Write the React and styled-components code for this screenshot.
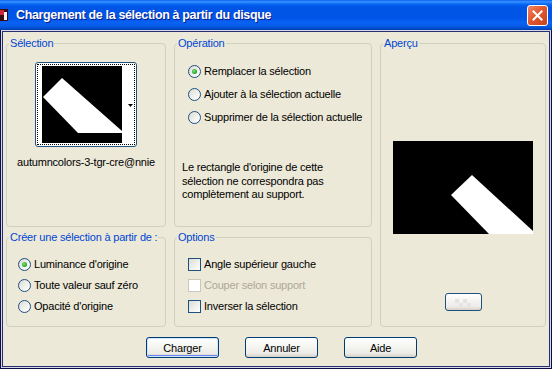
import React from "react";
import styled, { createGlobalStyle } from "styled-components";

const GlobalStyle = createGlobalStyle`
  html, body {
    margin: 0;
    padding: 0;
    background: #ece9d8;
  }
  body {
    font-family: "Liberation Sans", Arial, sans-serif;
    font-size: 11px;
    letter-spacing: -0.2px;
    color: #000;
  }
`;

const Window = styled.div`
  width: 552px;
  height: 369px;
  display: flex;
  flex-direction: column;
  overflow: hidden;
  background: #ece9d8;
`;

const TitleBar = styled.div`
  height: 30px;
  flex: none;
  display: flex;
  align-items: center;
  background: linear-gradient(
    #0a5ff0 0%,
    #3a93ff 6%,
    #1a7bff 10%,
    #0560ee 16%,
    #0055e5 24%,
    #0055e8 60%,
    #0a62f2 76%,
    #065ae6 88%,
    #0048c4 96%,
    #003ca8 100%
  );
`;

const TitleIcon = styled.svg`
  width: 10px;
  height: 14px;
  margin-left: -1px;
  flex: none;
`;

const TitleText = styled.div`
  margin-left: 7px;
  flex: 1;
  color: #fff;
  font-weight: 700;
  font-size: 12.5px;
  letter-spacing: -0.35px;
  text-shadow: 1px 1px #0a1e8a;
  white-space: nowrap;
`;

const CloseButton = styled.div`
  width: 19px;
  height: 19px;
  margin-right: 4px;
  flex: none;
  display: grid;
  place-items: center;
  border: 1px solid #fff;
  border-radius: 3px;
  background: linear-gradient(135deg, #f0876a 0%, #e2582f 45%, #c8401d 100%);
`;

const Frame = styled.div`
  flex: 1;
  display: flex;
  flex-direction: column;
  border: 1px solid #0d0d45;
  border-top: none;
  box-shadow: inset 0 0 0 1px #d6d6e6, inset 0 0 0 2px #25306e;
  padding: 7px 0 0 5px;
`;

const Groups = styled.div`
  display: grid;
  grid-template-columns: 160px 198px 166px;
  grid-template-rows: 190px 96px;
  column-gap: 8px;
  row-gap: 4px;
`;

const Group = styled.fieldset`
  margin: 0;
  min-width: 0;
  padding: ${(p) => p.$top || 0}px 0 0;
  border: 1px solid #d0d0bf;
  border-radius: 4px;
  display: flex;
  flex-direction: column;
  align-items: ${(p) => p.$align || "flex-start"};
  grid-area: ${(p) => p.$area || "auto"};
`;

const Legend = styled.legend`
  color: #0046d5;
  padding: 0 1px;
  margin-left: 2px;
  line-height: 13px;
  white-space: nowrap;
`;

const GroupBody = styled.div`
  padding-left: ${(p) => p.$indent || 0}px;
  display: flex;
  flex-direction: column;
`;

const ThumbButton = styled.div`
  width: 102px;
  height: 85px;
  box-sizing: border-box;
  border: 1px solid #1c5180;
  border-radius: 3px;
  background: #fff;
  padding: 1px;
  display: flex;
`;

const FocusRect = styled.div`
  flex: 1;
  border: 1px dotted #000;
  display: flex;
  padding: 1px 0 1px 4px;
`;

const ArrowStrip = styled.div`
  flex: 1;
  display: flex;
  align-items: center;
  justify-content: flex-end;
  padding-right: 1px;
  padding-top: 2px;
`;

const Caption = styled.div`
  margin-top: 9px;
  line-height: 13px;
`;

const OptionList = styled.div`
  display: flex;
  flex-direction: column;
  gap: ${(p) => p.$gap || 5}px;
`;

const OptionRow = styled.label`
  display: flex;
  align-items: center;
  height: 16px;
  gap: 3px;
  color: ${(p) => (p.$disabled ? "#aca899" : "#000")};
  white-space: nowrap;
`;

const Radio = styled.span`
  width: 11px;
  height: 11px;
  flex: none;
  border: 1px solid #1c5180;
  border-radius: 50%;
  display: inline-grid;
  place-items: center;
  background: linear-gradient(135deg, #dcdcd5 0%, #f2f2ef 60%, #fff 100%);

  &::after {
    content: "";
    width: 5px;
    height: 5px;
    border-radius: 50%;
    background: ${(p) =>
      p.$checked ? "radial-gradient(circle at 40% 40%, #7fe07f, #21a121 70%)" : "transparent"};
  }
`;

const Checkbox = styled.span`
  width: 11px;
  height: 11px;
  flex: none;
  border: 1px solid ${(p) => (p.$disabled ? "#cac8bb" : "#1c5180")};
  background: ${(p) =>
    p.$disabled ? "#fff" : "linear-gradient(135deg, #dcdcd5 0%, #f2f2ef 60%, #fff 100%)"};
`;

const Note = styled.p`
  margin: 36px 0 0 -6px;
  line-height: 13.5px;
`;

const PreviewButton = styled.div`
  width: 37px;
  height: 18px;
  margin-top: 59px;
  box-sizing: border-box;
  border: 1px solid #1c5180;
  border-radius: 3px;
  background: linear-gradient(#fff, #ecebe6 80%, #d6d0c5);
  display: grid;
  place-items: center;
`;

const ButtonRow = styled.div`
  display: flex;
  justify-content: center;
  gap: 26px;
  margin-top: 10px;
  padding-left: 6px;
`;

const Button = styled.div`
  width: 73px;
  height: 21px;
  box-sizing: border-box;
  border: 1px solid #003c74;
  border-radius: 3px;
  display: grid;
  place-items: center;
  background: linear-gradient(#fff 0%, #f4f4f0 50%, #ecebe6 80%, #d6d0c5 100%);
  box-shadow: ${(p) =>
    p.$default ? "inset 0 0 0 1px #cee7ff, inset 0 -1px 0 1px #6982ee" : "none"};
`;

function Thumbnail() {
  return (
    <svg width="80" height="77" viewBox="0 0 80 77">
      <rect width="80" height="77" fill="#000" />
      <polygon points="20,12 1,31 36,67 80,67 80,65" fill="#fff" />
    </svg>
  );
}

function Preview() {
  return (
    <svg width="140" height="93" viewBox="0 0 140 93">
      <rect width="140" height="93" fill="#000" />
      <polygon points="79,34 58,54 96,93 140,93 140,90" fill="#fff" />
    </svg>
  );
}

export default function App() {
  return (
    <>
      <GlobalStyle />
      <Window>
        <TitleBar>
          <TitleIcon viewBox="0 0 10 14">
            <rect x="0" y="1" width="9" height="12" fill="#3a0a10" />
            <rect x="1" y="2" width="4" height="5" fill="#c8283a" />
            <rect x="5" y="4" width="3" height="8" fill="#f4f4f4" />
          </TitleIcon>
          <TitleText>Chargement de la sélection à partir du disque</TitleText>
          <CloseButton>
            <svg width="11" height="11" viewBox="0 0 11 11">
              <path d="M1.5 1.5 L9.5 9.5 M9.5 1.5 L1.5 9.5" stroke="#fff" strokeWidth="2" strokeLinecap="square" />
            </svg>
          </CloseButton>
        </TitleBar>
        <Frame>
          <Groups>
            <Group $top={12} $align="center" $area="1 / 1 / 2 / 2">
              <Legend>Sélection</Legend>
              <ThumbButton>
                <FocusRect>
                  <Thumbnail />
                  <ArrowStrip>
                    <svg width="5" height="3" viewBox="0 0 5 3">
                      <polygon points="0,0 5,0 2.5,3" fill="#000" />
                    </svg>
                  </ArrowStrip>
                </FocusRect>
              </ThumbButton>
              <Caption>autumncolors-3-tgr-cre@nnie</Caption>
            </Group>

            <Group $top={13} $area="1 / 2 / 2 / 3">
              <Legend>Opération</Legend>
              <GroupBody $indent={13}>
                <OptionList $gap={7}>
                  <OptionRow>
                    <Radio $checked />
                    Remplacer la sélection
                  </OptionRow>
                  <OptionRow>
                    <Radio />
                    Ajouter à la sélection actuelle
                  </OptionRow>
                  <OptionRow>
                    <Radio />
                    Supprimer de la sélection actuelle
                  </OptionRow>
                </OptionList>
                <Note>
                  Le rectangle d'origine de cette
                  <br />
                  sélection ne correspondra pas
                  <br />
                  complètement au support.
                </Note>
              </GroupBody>
            </Group>

            <Group $top={91} $align="center" $area="1 / 3 / 3 / 4">
              <Legend>Aperçu</Legend>
              <Preview />
              <PreviewButton>
                <svg width="24" height="10" viewBox="0 0 24 10">
                  <rect x="4" y="2" width="4" height="4" fill="#e4e4e4" />
                  <rect x="12" y="2" width="4" height="4" fill="#e4e4e4" />
                  <rect x="8" y="6" width="4" height="4" fill="#e4e4e4" />
                  <rect x="16" y="6" width="4" height="4" fill="#e4e4e4" />
                </svg>
              </PreviewButton>
            </Group>

            <Group $top={12} $area="2 / 1 / 3 / 2">
              <Legend>Créer une sélection à partir de :</Legend>
              <GroupBody $indent={11}>
                <OptionList>
                  <OptionRow>
                    <Radio $checked />
                    Luminance d'origine
                  </OptionRow>
                  <OptionRow>
                    <Radio />
                    Toute valeur sauf zéro
                  </OptionRow>
                  <OptionRow>
                    <Radio />
                    Opacité d'origine
                  </OptionRow>
                </OptionList>
              </GroupBody>
            </Group>

            <Group $top={12} $area="2 / 2 / 3 / 3">
              <Legend>Options</Legend>
              <GroupBody $indent={13}>
                <OptionList>
                  <OptionRow>
                    <Checkbox />
                    Angle supérieur gauche
                  </OptionRow>
                  <OptionRow $disabled>
                    <Checkbox $disabled />
                    Couper selon support
                  </OptionRow>
                  <OptionRow>
                    <Checkbox />
                    Inverser la sélection
                  </OptionRow>
                </OptionList>
              </GroupBody>
            </Group>
          </Groups>

          <ButtonRow>
            <Button $default>Charger</Button>
            <Button>Annuler</Button>
            <Button>Aide</Button>
          </ButtonRow>
        </Frame>
      </Window>
    </>
  );
}
